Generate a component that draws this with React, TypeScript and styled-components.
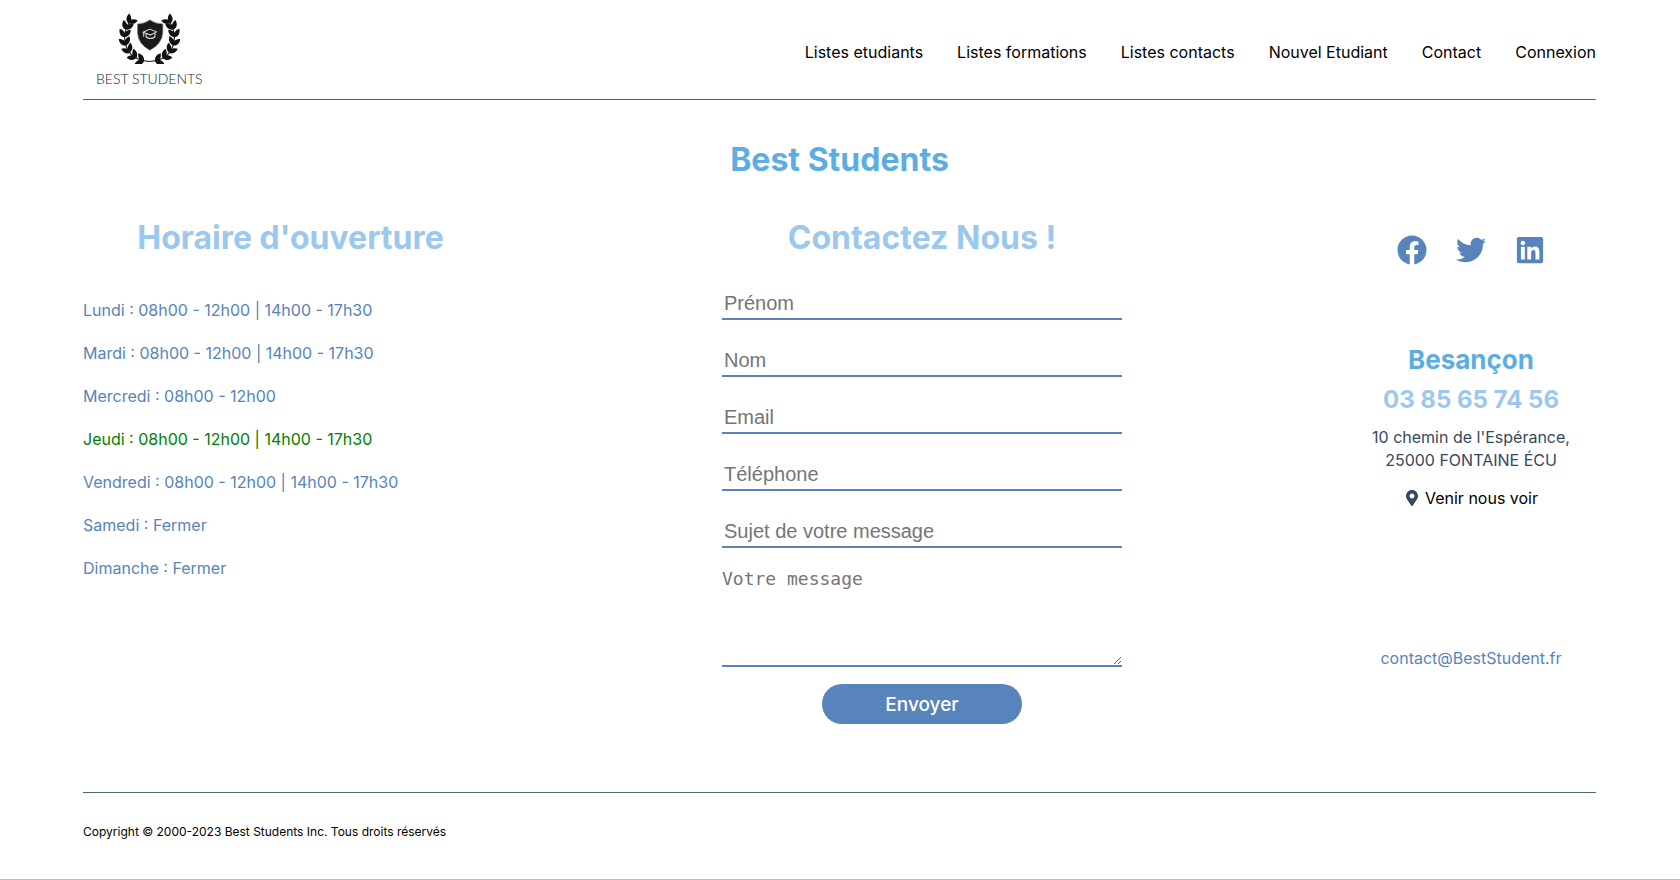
import React from 'react';
import styled, { createGlobalStyle } from 'styled-components';
import { FaFacebook, FaTwitter, FaLinkedin, FaMapMarkerAlt } from 'react-icons/fa';

const colors = {
  ink: '#000000',
  slate: '#34495e',
  rule: '#4f6878',
  bright: '#5dade2',
  pale: '#9bc8ec',
  blue: '#5784ba',
  open: '#008000',
  placeholder: '#757575',
};

const GlobalStyle = createGlobalStyle`
  *, *::before, *::after { box-sizing: border-box; }
  body {
    margin: 0;
    background: #ffffff;
    color: ${colors.ink};
    font-family: Inter, sans-serif;
    font-size: 16px;
    line-height: 24px;
  }
  h1, h2, h3, p, ul { margin: 0; padding: 0; }
  ul { list-style: none; }
  a { color: inherit; text-decoration: none; }
`;

const Page = styled.div`
  display: flex;
  flex-direction: column;
  min-height: 100vh;
  padding: 0 84px 0 83px;
  border-bottom: 1px solid #b9bcc4;
`;

const Header = styled.header`
  display: flex;
  align-items: center;
  justify-content: space-between;
  padding: 10px 0 6px;
  border-bottom: 1px solid ${colors.rule};
`;

const LogoLink = styled.a`
  display: flex;
  flex-direction: column;
  align-items: center;
  padding: 0 13px;
`;

const LogoMark = styled.svg`
  width: 63px;
  height: 54px;
`;

const LogoName = styled.span`
  font-family: Lato, sans-serif;
  font-size: 14px;
  font-weight: 300;
  line-height: 29px;
  color: #222222;
`;

const NavList = styled.ul`
  display: flex;
  gap: 34px;
`;

const Main = styled.main`
  flex: 1;
  padding: 40px 0 68px;
`;

const Title = styled.h1`
  font-size: 32px;
  line-height: 40px;
  text-align: center;
  color: ${colors.bright};
`;

const Columns = styled.div`
  display: flex;
  justify-content: space-between;
  gap: 24px;
  margin-top: 38px;
`;

const Column = styled.section<{ $basis: number }>`
  flex: 0 1 ${(p) => p.$basis}px;
  min-width: 0;
`;

const Heading = styled.h2`
  font-size: 32px;
  line-height: 40px;
  text-align: center;
  color: ${colors.pale};
`;

const HoursList = styled.ul`
  display: grid;
  gap: 19px;
  margin-top: 40px;
`;

const HoursRow = styled.li<{ $open?: boolean }>`
  color: ${(p) => (p.$open ? colors.open : colors.blue)};
`;

const Form = styled.form`
  display: flex;
  flex-direction: column;
  margin-top: 30px;
`;

const Fields = styled.div`
  display: grid;
  gap: 25px;
`;

const Field = styled.input`
  width: 100%;
  padding: 3px 2px;
  border: 0;
  border-bottom: 2px solid ${colors.blue};
  background: none;
  font: 20px/24px 'Liberation Sans', Arial, sans-serif;
  height: 32px;
  outline: none;
  &::placeholder { color: ${colors.placeholder}; opacity: 1; }
`;

const Message = styled.textarea`
  display: block;
  width: 100%;
  height: 100px;
  margin-top: 19px;
  padding: 0;
  border: 0;
  border-bottom: 2px solid ${colors.blue};
  background: none;
  font: 18px/24px 'DejaVu Sans Mono', monospace;
  resize: both;
  outline: none;
  &::placeholder { color: ${colors.placeholder}; opacity: 1; }
`;

const Submit = styled.button`
  align-self: center;
  width: 50%;
  height: 40px;
  margin-top: 17px;
  padding: 2px 0 0;
  border: 0;
  border-radius: 20px;
  background: ${colors.blue};
  color: #ffffff;
  font: 500 19px/24px Inter, sans-serif;
  cursor: pointer;
`;

const Info = styled(Column)`
  display: flex;
  flex-direction: column;
  align-items: center;
  text-align: center;
  padding-top: 17px;
`;

const Socials = styled.div`
  display: flex;
  gap: 29px;
  font-size: 30px;
  line-height: 30px;
  color: ${colors.blue};
  a { display: flex; }
  svg { width: auto; }
`;

const City = styled.h3`
  margin-top: 79px;
  font-size: 26px;
  line-height: 32px;
  color: ${colors.bright};
`;

const Phone = styled.a`
  margin-top: 8px;
  font-size: 24px;
  font-weight: 700;
  line-height: 32px;
  color: ${colors.pale};
`;

const Address = styled.p`
  margin-top: 10px;
  line-height: 23px;
  color: ${colors.slate};
`;

const MapLink = styled.a`
  display: flex;
  align-items: center;
  gap: 5px;
  margin-top: 14px;
  svg { width: auto; color: ${colors.slate}; }
`;

const Email = styled.a`
  margin-top: 136px;
  color: ${colors.blue};
`;

const Footer = styled.footer`
  padding: 30px 0 38px;
  border-top: 1px solid ${colors.rule};
  font-size: 12px;
  line-height: 18px;
`;

const LEAF = 'M0 2C-10 -5 -9 -17 1 -27C9 -17 9 -6 0 2Z';
const LEAF_ANGLES = [76, 57, 38, 19, 0, -18, -34];

function Branch() {
  return (
    <g>
      <path d="M240 183Q170 178 167 112Q168 84 184 64" fill="none" stroke="#111" strokeWidth="3" />
      {LEAF_ANGLES.map((angle) => {
        const rad = (angle * Math.PI) / 180;
        const x = 240 - 73 * Math.cos(rad);
        const y = 110 + 73 * Math.sin(rad);
        return (
          <g key={angle} transform={`translate(${x} ${y}) rotate(${-angle})`} fill="#111">
            <path d={LEAF} transform="rotate(-34)" />
            <path d={LEAF} transform="rotate(40)" />
          </g>
        );
      })}
    </g>
  );
}

function Logo() {
  return (
    <LogoMark viewBox="148 32 184 158" aria-hidden="true">
      <Branch />
      <g transform="translate(480 0) scale(-1 1)">
        <Branch />
      </g>
      <path d="M241 61Q258 72 279 73V98Q277 131 241 150Q206 131 205 98V73Q225 72 241 61Z" fill="#1b1b1b" stroke="#777" strokeWidth="2" />
      <g fill="none" stroke="#e4e4e4" strokeWidth="3" strokeLinejoin="round" strokeLinecap="round">
        <path d="M221 97L241 88L261 96L243 105Z" />
        <path d="M230 103V111Q243 120 256 111V101" />
        <path d="M223 99V109" />
      </g>
    </LogoMark>
  );
}

const navItems = ['Listes etudiants', 'Listes formations', 'Listes contacts', 'Nouvel Etudiant', 'Contact', 'Connexion'];

const hours = [
  { day: 'Lundi', time: '08h00 - 12h00 | 14h00 - 17h30' },
  { day: 'Mardi', time: '08h00 - 12h00 | 14h00 - 17h30' },
  { day: 'Mercredi', time: '08h00 - 12h00' },
  { day: 'Jeudi', time: '08h00 - 12h00 | 14h00 - 17h30', open: true },
  { day: 'Vendredi', time: '08h00 - 12h00 | 14h00 - 17h30' },
  { day: 'Samedi', time: 'Fermer' },
  { day: 'Dimanche', time: 'Fermer' },
];

const fields = [
  { name: 'firstName', label: 'Prénom', type: 'text' },
  { name: 'lastName', label: 'Nom', type: 'text' },
  { name: 'email', label: 'Email', type: 'email' },
  { name: 'phone', label: 'Téléphone', type: 'tel' },
  { name: 'subject', label: 'Sujet de votre message', type: 'text' },
];

export default function App() {
  return (
    <>
      <GlobalStyle />
      <Page>
        <Header>
          <LogoLink href="#">
            <Logo />
            <LogoName>BEST STUDENTS</LogoName>
          </LogoLink>
          <nav>
            <NavList>
              {navItems.map((item) => (
                <li key={item}>
                  <a href="#">{item}</a>
                </li>
              ))}
            </NavList>
          </nav>
        </Header>

        <Main>
          <Title>Best Students</Title>
          <Columns>
            <Column $basis={415}>
              <Heading>Horaire d'ouverture</Heading>
              <HoursList>
                {hours.map(({ day, time, open }) => (
                  <HoursRow key={day} $open={open}>{`${day} : ${time}`}</HoursRow>
                ))}
              </HoursList>
            </Column>

            <Column $basis={400}>
              <Heading>Contactez Nous !</Heading>
              <Form onSubmit={(e) => e.preventDefault()}>
                <Fields>
                  {fields.map(({ name, label, type }) => (
                    <Field key={name} name={name} type={type} placeholder={label} aria-label={label} />
                  ))}
                </Fields>
                <Message name="message" placeholder="Votre message" aria-label="Votre message" />
                <Submit type="submit">Envoyer</Submit>
              </Form>
            </Column>

            <Info $basis={250}>
              <Socials>
                <a href="#" aria-label="Facebook"><FaFacebook /></a>
                <a href="#" aria-label="Twitter"><FaTwitter /></a>
                <a href="#" aria-label="LinkedIn"><FaLinkedin /></a>
              </Socials>
              <City>Besançon</City>
              <Phone href="tel:0385657456">03 85 65 74 56</Phone>
              <Address>
                10 chemin de l'Espérance,
                <br />
                25000 FONTAINE ÉCU
              </Address>
              <MapLink href="#">
                <FaMapMarkerAlt />
                Venir nous voir
              </MapLink>
              <Email href="mailto:contact@BestStudent.fr">contact@BestStudent.fr</Email>
            </Info>
          </Columns>
        </Main>

        <Footer>Copyright © 2000-2023 Best Students Inc. Tous droits réservés</Footer>
      </Page>
    </>
  );
}
